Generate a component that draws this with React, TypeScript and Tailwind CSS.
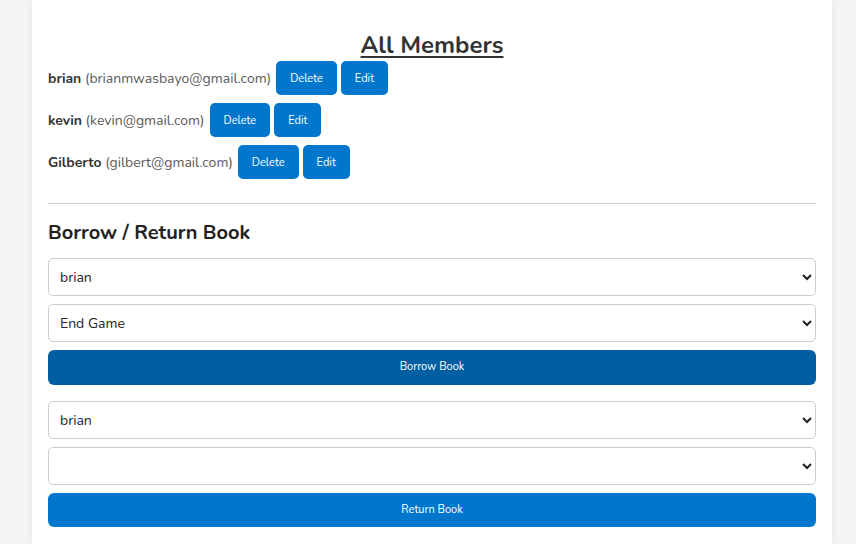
import React from "react";

const members = [
  { name: "brian", email: "brianmwasbayo@gmail.com" },
  { name: "kevin", email: "kevin@gmail.com" },
  { name: "Gilberto", email: "gilbert@gmail.com" },
];

function SmallBtn({ children }: { children: React.ReactNode }) {
  return (
    <button className="h-[34px] px-[14px] rounded-[5px] bg-[#0077cc] text-white text-[11px] leading-none">
      {children}
    </button>
  );
}

function Select({ children }: { children?: React.ReactNode }) {
  return (
    <select className="w-full h-[38px] border border-[#cccccc] rounded-[5px] bg-white pl-[7px] pr-[4px] text-[14px] text-[#222]">
      {children}
    </select>
  );
}

export default function App() {
  return (
    <div
      className="min-h-[544px] bg-[#f4f5f7] flex pl-[32px]"
      style={{ fontFamily: "Nunito, Lato, 'Noto Sans', sans-serif" }}
    >
      <div className="w-[800px] bg-white shadow-[0_0_10px_rgba(0,0,0,0.08)] px-4 pt-[30px] pb-4 text-[#333]">
        <h2 className="text-center text-[24px] font-bold underline leading-[30px] text-[#333] decoration-[2px] underline-offset-[3px]">
          All Members
        </h2>
        <ul className="flex flex-col gap-2 mt-[1px]">
          {members.map((m) => (
            <li key={m.name} className="flex items-center gap-1 text-[14px]">
              <span className="mr-[1px]">
                <b className="font-bold">{m.name}</b>{" "}
                <span className="text-[#5a5a5a]">({m.email})</span>
              </span>
              <SmallBtn>Delete</SmallBtn>
              <SmallBtn>Edit</SmallBtn>
            </li>
          ))}
        </ul>
        <hr className="mt-[24px] border-0 border-t border-[#cccccc]" />
        <h3 className="text-[20px] font-bold mt-[17px] leading-[24px] text-[#222]">Borrow / Return Book</h3>
        <div className="flex flex-col gap-2 mt-[13px]">
          <Select>
            <option>brian</option>
          </Select>
          <Select>
            <option>End Game</option>
          </Select>
          <button className="w-full h-[35px] rounded-[6px] bg-[#005fa3] text-white text-[11px]">Borrow Book</button>
        </div>
        <div className="flex flex-col gap-2 mt-4">
          <Select>
            <option>brian</option>
          </Select>
          <Select />
          <button className="w-full h-[34px] rounded-[6px] bg-[#0077cc] text-white text-[11px]">Return Book</button>
        </div>
      </div>
    </div>
  );
}
